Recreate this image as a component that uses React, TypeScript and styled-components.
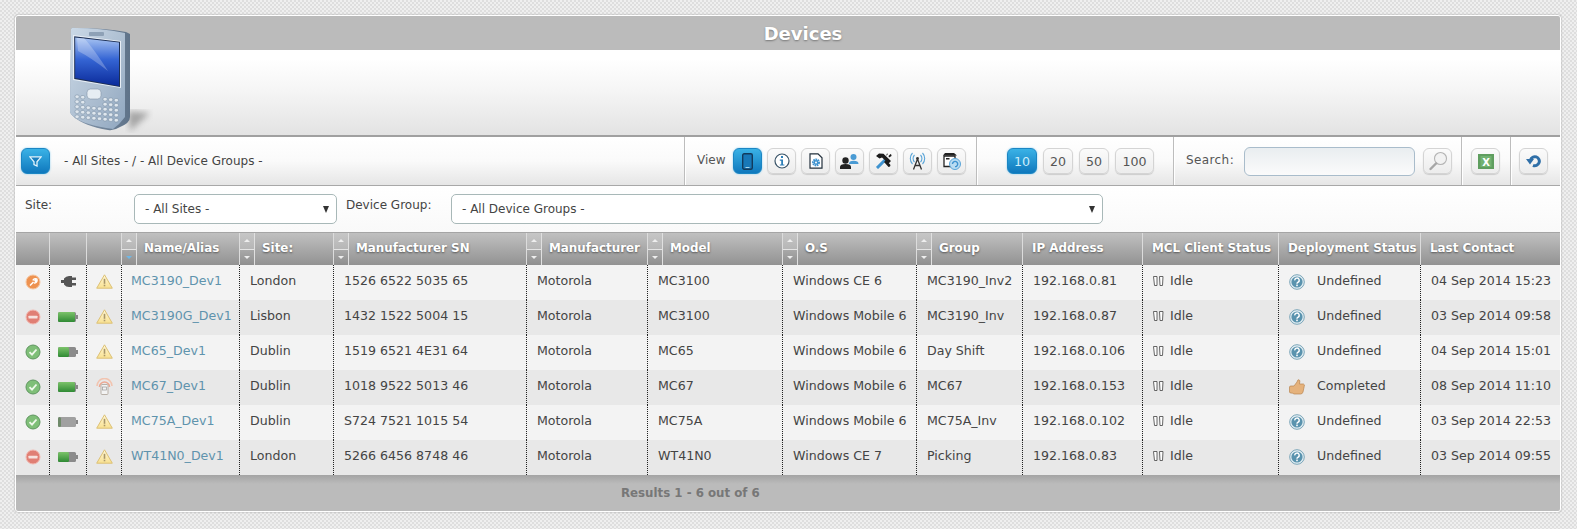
import React from 'react'
import styled, { createGlobalStyle } from 'styled-components'

const COLS = '33px 37px 35px 118px 94px 193px 121px 135px 134px 106px 120px 136px 142px 140px'

const GlobalStyle = createGlobalStyle`
  html, body { margin: 0; padding: 0; }
  body {
    font-family: "DejaVu Sans", Verdana, sans-serif;
    font-size: 12.6px;
    color: #444;
    background-color: #e9e9e9;
    background-image: conic-gradient(#dedede 25%, #efefef 0 50%, #dedede 0 75%, #efefef 0);
    background-size: 4px 4px;
  }
`

const Page = styled.div`
  width: 1577px;
  height: 529px;
  padding: 15px 16px 0 15px;
  box-sizing: border-box;
  overflow: hidden;
`

const Panel = styled.div`
  position: relative;
  width: 1546px;
  box-sizing: border-box;
  border: 1px solid #fff;
  border-radius: 3px;
  box-shadow: 0 0 2px #999;
  background: #fff;
  overflow: hidden;
`

const TitleBar = styled.div`
  height: 34px;
  background: #bbbbbb;
  color: #fff;
  font-size: 18px;
  font-weight: bold;
  text-shadow: 0 1px 2px #777;
  display: flex;
  align-items: center;
  justify-content: center;
  padding-left: 30px;
`

const Banner = styled.div`
  height: 85px;
  background: linear-gradient(#ffffff 10%, #f6f6f6 45%, #e3e3e3);
  border-bottom: 2px solid #a0a0a0;
`

const PhoneArt = styled.svg`
  position: absolute;
  left: 54px;
  top: 11px;
`

const Toolbar = styled.div`
  display: flex;
  height: 48px;
  font-size: 12px;
  background: linear-gradient(#ffffff, #fafafa 50%, #e6e6e6);
  border-bottom: 1px solid #a8a8a8;
`

const Section = styled.div<{ $width: number; $pad: number; $gap?: number; $first?: boolean }>`
  width: ${p => p.$width}px;
  box-sizing: border-box;
  display: flex;
  align-items: center;
  gap: ${p => p.$gap ?? 5}px;
  border-left: ${p => (p.$first ? 'none' : '1px solid #bdbdbd')};
  box-shadow: ${p => (p.$first ? 'none' : 'inset 1px 0 0 #fff')};
  padding-left: ${p => p.$pad}px;
`

const ToolButton = styled.button<{ $active?: boolean; $width?: number }>`
  width: ${p => p.$width ?? 29}px;
  height: 26px;
  padding: 0;
  flex: none;
  display: flex;
  align-items: center;
  justify-content: center;
  border-radius: 6px;
  font: 12.6px "DejaVu Sans", sans-serif;
  color: ${p => (p.$active ? '#cdeefb' : '#555')};
  border: 1px solid ${p => (p.$active ? '#1b86c4' : '#d4d4d4')};
  background: ${p =>
    p.$active ? 'linear-gradient(#3ab2e6, #0f78bd)' : 'linear-gradient(#fbfbfb, #ececec)'};
  box-shadow: ${p => (p.$active ? '0 0 2px #7cc8ee' : '0 1px 1px #ccc, inset 0 0 1px #fff')};
`

const FilterSummary = styled.span`
  margin-left: 9px;
  color: #444;
`

const ViewLabel = styled.span`
  margin-right: 3px;
  color: #555;
  padding-bottom: 3px;
`

const SearchLabel = styled.span`
  width: 53px;
  color: #555;
  padding-bottom: 3px;
  letter-spacing: 0.4px;
`

const SearchInput = styled.input`
  width: 171px;
  height: 29px;
  box-sizing: border-box;
  border: 1px solid #a9bccb;
  border-radius: 6px;
  background: linear-gradient(#e9edf0, #fbfbfb);
  margin-right: 3px;
`

const FilterRow = styled.div`
  height: 46px;
  display: flex;
  padding: 8px 0 0 9px;
  box-sizing: border-box;
  font-size: 12px;
  background: linear-gradient(#ffffff, #f9f9f9);
`

const FilterLabel = styled.label<{ $width: number }>`
  width: ${p => p.$width}px;
  padding-top: 4px;
  color: #444;
`

const SelectBox = styled.div<{ $width: number }>`
  width: ${p => p.$width}px;
  height: 30px;
  margin-right: 9px;
  box-sizing: border-box;
  border: 1px solid #a8b8b8;
  border-radius: 5px;
  background: #fff;
  padding: 0 7px 0 10px;
  display: flex;
  align-items: center;
  justify-content: space-between;
`

const SelectArrow = styled.i`
  width: 0;
  height: 0;
  border-left: 3.5px solid transparent;
  border-right: 3.5px solid transparent;
  border-top: 7px solid #333;
`

const HeadRow = styled.div`
  display: grid;
  grid-template-columns: ${COLS};
  height: 32px;
  border-top: 1px solid #a5a5a5;
  background: linear-gradient(#c0c0c0, #929292);
  color: #fff;
  font-weight: bold;
  font-size: 11.9px;
  text-shadow: 0 1px 2px #555;
`

const HeadCell = styled.div<{ $first?: boolean }>`
  display: flex;
  align-items: center;
  white-space: nowrap;
  overflow: hidden;
  border-left: ${p => (p.$first ? 'none' : '1px solid #dcdcdc')};
`

const SortStack = styled.div`
  width: 14px;
  height: 100%;
  flex: none;
  display: grid;
  grid-template-rows: 1fr 1fr;
  gap: 1px;
  background: #e4e4e4;
  border-right: 1px solid #e0e0e0;
`

const SortButton = styled.div<{ $dir: 'up' | 'down'; $on?: boolean }>`
  display: flex;
  align-items: center;
  justify-content: center;
  background: ${p => (p.$dir === 'up' ? 'linear-gradient(#c6c6c6, #b6b6b6)' : 'linear-gradient(#a8a8a8, #8f8f8f)')};
  &::after {
    content: '';
    width: 0;
    height: 0;
    border-left: 3px solid transparent;
    border-right: 3px solid transparent;
    ${p => (p.$dir === 'up' ? 'border-bottom: 3px solid #eee;' : `border-top: 3px solid ${p.$on ? '#6fb7e6' : '#eee'};`)}
  }
`

const HeadLabel = styled.span<{ $pad: number }>`
  padding: 0 0 3px ${p => p.$pad}px;
`

const BodyRow = styled.div<{ $alt: boolean }>`
  display: grid;
  grid-template-columns: ${COLS};
  height: 35px;
  background: ${p => (p.$alt ? '#e8e8e8' : '#f3f3f3')};
`

const Cell = styled.div<{ $icon?: boolean; $first?: boolean }>`
  display: flex;
  align-items: center;
  justify-content: ${p => (p.$icon ? 'center' : 'flex-start')};
  padding: 0 0 4px ${p => (p.$icon ? 0 : 10)}px;
  white-space: nowrap;
  border-left: ${p => (p.$first ? 'none' : '1px dotted #222')};
`

const IconCell = styled(Cell)`
  padding-bottom: 2px;
`

const NameLink = styled.a`
  color: #5f93ad;
  margin-left: -1px;
`

const StateIcon = styled.svg`
  margin-right: 6px;
  flex: none;
`

const DeployIcon = styled.svg`
  margin: 3px 12px 0 0;
  flex: none;
`

const Footer = styled.div`
  height: 36px;
  background: linear-gradient(#a4a4a4, #bbbbbb 25%);
  color: #777;
  font-weight: bold;
  font-size: 11.8px;
  display: flex;
  align-items: center;
  padding-left: 605px;
`

type Status = 'wrench' | 'stop' | 'ok'
type Power = 'plug' | 'full' | 'part' | 'empty'

interface Device {
  status: Status
  power: Power
  signal: 'warn' | 'cast'
  name: string
  site: string
  sn: string
  model: string
  os: string
  group: string
  ip: string
  deployed: boolean
  last: string
}

const devices: Device[] = [
  { status: 'wrench', power: 'plug', signal: 'warn', name: 'MC3190_Dev1', site: 'London', sn: '1526 6522 5035 65', model: 'MC3100', os: 'Windows CE 6', group: 'MC3190_Inv2', ip: '192.168.0.81', deployed: false, last: '04 Sep 2014 15:23' },
  { status: 'stop', power: 'full', signal: 'warn', name: 'MC3190G_Dev1', site: 'Lisbon', sn: '1432 1522 5004 15', model: 'MC3100', os: 'Windows Mobile 6', group: 'MC3190_Inv', ip: '192.168.0.87', deployed: false, last: '03 Sep 2014 09:58' },
  { status: 'ok', power: 'part', signal: 'warn', name: 'MC65_Dev1', site: 'Dublin', sn: '1519 6521 4E31 64', model: 'MC65', os: 'Windows Mobile 6', group: 'Day Shift', ip: '192.168.0.106', deployed: false, last: '04 Sep 2014 15:01' },
  { status: 'ok', power: 'full', signal: 'cast', name: 'MC67_Dev1', site: 'Dublin', sn: '1018 9522 5013 46', model: 'MC67', os: 'Windows Mobile 6', group: 'MC67', ip: '192.168.0.153', deployed: true, last: '08 Sep 2014 11:10' },
  { status: 'ok', power: 'empty', signal: 'warn', name: 'MC75A_Dev1', site: 'Dublin', sn: 'S724 7521 1015 54', model: 'MC75A', os: 'Windows Mobile 6', group: 'MC75A_Inv', ip: '192.168.0.102', deployed: false, last: '03 Sep 2014 22:53' },
  { status: 'stop', power: 'part', signal: 'warn', name: 'WT41N0_Dev1', site: 'London', sn: '5266 6456 8748 46', model: 'WT41N0', os: 'Windows CE 7', group: 'Picking', ip: '192.168.0.83', deployed: false, last: '03 Sep 2014 09:55' },
]

const headers: { label: string; sort?: boolean; on?: boolean }[] = [
  { label: '' },
  { label: '' },
  { label: '' },
  { label: 'Name/Alias', sort: true, on: true },
  { label: 'Site:', sort: true },
  { label: 'Manufacturer SN', sort: true },
  { label: 'Manufacturer', sort: true },
  { label: 'Model', sort: true },
  { label: 'O.S', sort: true },
  { label: 'Group', sort: true },
  { label: 'IP Address' },
  { label: 'MCL Client Status' },
  { label: 'Deployment Status' },
  { label: 'Last Contact' },
]

function Phone() {
  const keys: [number, number][] = []
  for (let r = 0; r < 5; r++) {
    for (let c = 0; c < 8; c++) {
      if (r < 2 && c > 1 && c < 5) continue
      keys.push([5 + c * 5.6, 68 + r * 5 + c * 0.5])
    }
  }
  return (
    <PhoneArt width="85" height="108" viewBox="0 0 85 108">
      <defs>
        <linearGradient id="ph" x1="0" y1="0" x2="1" y2="1">
          <stop offset="0" stopColor="#cbd9e7" />
          <stop offset="0.6" stopColor="#aabccf" />
          <stop offset="1" stopColor="#8fa6bf" />
        </linearGradient>
        <linearGradient id="scr" x1="0" y1="0" x2="0" y2="1">
          <stop offset="0" stopColor="#a8c4f2" />
          <stop offset="0.45" stopColor="#3565d4" />
          <stop offset="1" stopColor="#0a2a9a" />
        </linearGradient>
        <linearGradient id="sd" x1="0" y1="0" x2="1" y2="0">
          <stop offset="0" stopColor="#8799ae" />
          <stop offset="1" stopColor="#5f7389" />
        </linearGradient>
        <filter id="bl"><feGaussianBlur stdDeviation="3" /></filter>
      </defs>
      <path d="M58 84 L80 86 L60 104 Z" fill="#777" opacity="0.6" filter="url(#bl)" />
      <path d="M1 2 Q2 0 6 1 Q35 1 56 5 L60 7 L60 90 Q60 96 50 100 Q44 104 38 103 Q14 99 4 90 Q0 87 0 84 Z" fill="url(#sd)" />
      <path d="M1 2 Q2 0 6 1 Q30 1 55 6 L55 90 Q50 97 43 102 Q14 98 4 90 Q0 87 0 84 Z" fill="url(#ph)" />
      <path d="M3 8 L51 14 L51 61 L3 53 Z" fill="#e8eef5" />
      <path d="M4.2 9.2 L50 14.8 L50 60 L4.2 52 Z" fill="#1c2f55" />
      <path d="M5.2 10.5 L49 15.5 L49 59 L5.2 51 Z" fill="url(#scr)" />
      <path d="M14 11 Q24 22 38 44 Q20 30 8 24 L7 11 Z" fill="#fff" opacity="0.25" />
      <rect x="19" y="5" width="15" height="4" rx="1" fill="#8ea1b6" />
      {keys.map(([x, y]) => (
        <rect key={`${x}-${y}`} x={x} y={y} width="4.2" height="3.4" rx="1.4" fill="#dfe7ee" stroke="#71869c" strokeWidth="0.5" />
      ))}
      <rect x="17" y="62" width="14" height="10" rx="3.5" fill="#e6edf3" stroke="#8396aa" strokeWidth="0.6" />
    </PhoneArt>
  )
}

function StatusIcon({ kind }: { kind: Status }) {
  const fill = { wrench: '#ee9250', stop: '#e07f74', ok: '#7fbf78' }[kind]
  const ring = { wrench: '#f5c6a0', stop: '#f2b9b1', ok: '#5f9660' }[kind]
  return (
    <svg width="16" height="16" viewBox="0 0 16 16">
      <circle cx="8" cy="8" r="7" fill={fill} stroke={ring} />
      {kind === 'wrench' && <path d="M5 11.5 L8.5 8 M8 6.5 A2.4 2.4 0 0 1 11.5 5 L10 6.6 L10.8 7.6 L12 6.6 A2.6 2.6 0 0 1 9 9" stroke="#fff" strokeWidth="1.5" fill="none" />}
      {kind === 'stop' && <rect x="3.5" y="6.7" width="9" height="2.8" rx="0.6" fill="#f6e2de" />}
      {kind === 'ok' && <path d="M4.5 8.2 L7 10.7 L11.5 5.5" stroke="#eef8ea" strokeWidth="1.9" fill="none" />}
    </svg>
  )
}

function PowerIcon({ kind }: { kind: Power }) {
  if (kind === 'plug') {
    return (
      <svg width="15" height="11" viewBox="0 0 15 11">
        <rect x="0" y="4" width="4" height="3" fill="#555" />
        <path d="M3 2.5 Q5 0 8 0 H11 V11 H8 Q5 11 3 8.5 Z" fill="#555" />
        <rect x="11" y="1.5" width="4" height="2.5" fill="#555" />
        <rect x="11" y="7" width="4" height="2.5" fill="#555" />
      </svg>
    )
  }
  const level = { full: 17, part: 11, empty: 3 }[kind]
  const id = `bat-${kind}`
  return (
    <svg width="20" height="10" viewBox="0 0 20 10">
      <defs>
        <linearGradient id={id} x1="0" y1="0" x2="0" y2="1">
          <stop offset="0" stopColor="#7cc36a" />
          <stop offset="1" stopColor="#2f8a34" />
        </linearGradient>
      </defs>
      <rect x="0" y="0" width="18" height="10" rx="1.5" fill={kind === 'empty' ? '#a0a0a0' : '#8b8b8b'} />
      <rect x="18" y="3" width="2" height="4" fill="#888" />
      <rect x="0" y="0" width={level} height="10" rx="1.5" fill={kind === 'empty' ? '#6f8a6a' : `url(#${id})`} />
    </svg>
  )
}

function SignalIcon({ kind }: { kind: 'warn' | 'cast' }) {
  if (kind === 'cast') {
    return (
      <svg width="17" height="17" viewBox="0 0 17 17">
        <path d="M1 8 A7.5 7.5 0 0 1 16 8" fill="none" stroke="#f2c4b0" strokeWidth="1.6" />
        <path d="M3.5 9 A5 5 0 0 1 13.5 9" fill="none" stroke="#eca892" strokeWidth="1.6" />
        <rect x="5" y="6.5" width="7" height="10" rx="1" fill="#f3f3f3" stroke="#b8b0a8" />
        <rect x="6.5" y="9" width="4" height="3" fill="none" stroke="#999" strokeWidth="0.7" />
      </svg>
    )
  }
  return (
    <svg width="17" height="15" viewBox="0 0 17 15">
      <defs>
        <linearGradient id="warn" x1="0" y1="0" x2="0" y2="1">
          <stop offset="0" stopColor="#fff8d8" />
          <stop offset="1" stopColor="#f8e090" />
        </linearGradient>
      </defs>
      <path d="M8.5 0.8 L16.3 14.2 H0.7 Z" fill="url(#warn)" stroke="#dcc074" strokeLinejoin="round" />
      <rect x="7.7" y="4.8" width="1.6" height="5" fill="#a8966a" />
      <rect x="7.7" y="10.7" width="1.6" height="1.6" fill="#a8966a" />
    </svg>
  )
}

function IdleIcon() {
  return (
    <StateIcon width="11" height="10" viewBox="0 0 11 10">
      <path d="M0.5 0.5 H4 V9.5 H1.5 L0.5 0.5 Z M6.5 0.5 H10 L9.5 9.5 H7 Z" fill="#fff" stroke="#555" strokeWidth="0.9" />
    </StateIcon>
  )
}

function QuestionIcon() {
  return (
    <DeployIcon width="16" height="16" viewBox="0 0 16 16">
      <circle cx="8" cy="8" r="7.3" fill="#e3eef3" stroke="#7aa5b8" />
      <circle cx="8" cy="8" r="5.6" fill="#5a93ae" />
      <path d="M5.8 6.4 A2.2 2.2 0 1 1 8.8 8.3 Q8 8.7 8 9.8" fill="none" stroke="#fff" strokeWidth="1.4" />
      <rect x="7.2" y="10.6" width="1.6" height="1.6" fill="#fff" />
    </DeployIcon>
  )
}

function ThumbIcon() {
  return (
    <DeployIcon width="16" height="16" viewBox="0 0 16 16">
      <path d="M0.5 8 Q0.5 7 2 7 H5 L8 3 Q8.5 0.5 10 0.7 Q11.5 1 10.5 5 H14.5 Q16 5.5 15.2 7.5 L14 13 Q13.5 15 11.5 15 H5 Q4 14 2 14 Q0.5 14 0.5 13 Z" fill="#e5b27c" stroke="#b98550" strokeWidth="0.7" />
    </DeployIcon>
  )
}

function FilterGlyph() {
  return (
    <svg width="13" height="11" viewBox="0 0 13 11">
      <path d="M0.8 0.8 H12.2 L8 5.8 V10 L5 8.5 V5.8 Z" fill="#1b7fbe" stroke="#e2f4fc" strokeWidth="1.3" />
    </svg>
  )
}

function MobileGlyph() {
  return (
    <svg width="11" height="17" viewBox="0 0 11 17">
      <rect x="0.7" y="0.7" width="9.6" height="15.6" rx="1.5" fill="#1878b8" stroke="#123a5c" strokeWidth="1.4" />
      <rect x="3.5" y="14" width="4" height="1" fill="#a8d8f0" />
    </svg>
  )
}

function InfoGlyph() {
  return (
    <svg width="16" height="16" viewBox="0 0 16 16">
      <circle cx="8" cy="8" r="7" fill="#fff" stroke="#3a5468" strokeWidth="1.2" />
      <rect x="7" y="3" width="2" height="2" fill="#2d7fb8" />
      <path d="M5.8 6.6 H9 V11.5 H10.4 V12.6 H5.8 V11.5 H7.2 V7.7 H5.8 Z" fill="#2d7fb8" />
    </svg>
  )
}

function FileGearGlyph() {
  return (
    <svg width="14" height="16" viewBox="0 0 14 16">
      <path d="M1 0.8 H9 L13 4.8 V15.2 H1 Z" fill="#fff" stroke="#22303c" strokeWidth="1.2" />
      <circle cx="7" cy="9.5" r="3" fill="none" stroke="#3f93d0" strokeWidth="2" strokeDasharray="1.6 0.6" />
      <circle cx="7" cy="9.5" r="2.4" fill="#3f93d0" />
      <circle cx="7" cy="9.5" r="1" fill="#fff" />
    </svg>
  )
}

function UsersGlyph() {
  return (
    <svg width="19" height="15" viewBox="0 0 19 15">
      <circle cx="13.5" cy="3" r="3" fill="#4a9bd4" />
      <path d="M9 10 Q9 6.8 13.5 6.8 Q18.5 6.8 18.5 10 Z" fill="#4a9bd4" />
      <circle cx="5.5" cy="6.5" r="3.2" fill="#222" />
      <path d="M0 15 V13 Q0 10 5.5 10 Q11 10 11 13 V15 Z" fill="#222" />
    </svg>
  )
}

function ToolsGlyph() {
  return (
    <svg width="17" height="16" viewBox="0 0 17 16">
      <path d="M1.5 14.5 L10 6 M2.5 15.5 L11 7" stroke="#3f93d0" strokeWidth="1.6" />
      <path d="M1 3 L4 0.5 L8.5 0.8 L16 8 L13.5 10.5 L7 4.5 L4.5 5.5 Z" fill="#1b1b1b" />
      <path d="M9 9 L13.5 14 A2 2 0 0 0 15.5 12 L11 7 Z" fill="#1b1b1b" />
      <path d="M15.5 1 L13.5 3 L14 4.5 L16.5 3 Q16.8 1.5 15.5 1 Z M11 3 L13 1 L12 0.5 Z" fill="#1b1b1b" />
    </svg>
  )
}

function TowerGlyph() {
  return (
    <svg width="17" height="18" viewBox="0 0 17 18">
      <g fill="none" stroke="#5aa5d8" strokeWidth="1.1">
        <path d="M5.5 3 A5 5 0 0 0 5.5 10" />
        <path d="M3.5 1 A8 8 0 0 0 3.5 12" />
        <path d="M11.5 3 A5 5 0 0 1 11.5 10" />
        <path d="M13.5 1 A8 8 0 0 1 13.5 12" />
      </g>
      <circle cx="8.5" cy="6.5" r="1.4" fill="#333" />
      <path d="M8.5 7 L4.5 17.5 M8.5 7 L12.5 17.5 M6 13.5 H11" fill="none" stroke="#333" strokeWidth="1.3" />
    </svg>
  )
}

function ArchiveGlyph() {
  return (
    <svg width="19" height="18" viewBox="0 0 19 18">
      <path d="M3 1 H12 L15 3.5 H1 Z" fill="#222" />
      <path d="M2 4 H13 V14.5 H2 Z" fill="#fff" stroke="#222" strokeWidth="1.3" />
      <rect x="4" y="6" width="3.5" height="1.5" fill="#222" />
      <circle cx="13" cy="12" r="5.5" fill="#b9dcf2" stroke="#5aa5d8" />
      <path d="M10.5 12 A2.6 2.6 0 1 1 13 14.6" fill="none" stroke="#3f93d0" strokeWidth="1.4" />
    </svg>
  )
}

function LensGlyph() {
  return (
    <svg width="20" height="20" viewBox="0 0 20 20">
      <circle cx="12.5" cy="7.5" r="6" fill="#f2f2f2" stroke="#b4b4b4" strokeWidth="1.1" />
      <path d="M8 12.5 L2.5 18" stroke="#a6a6a6" strokeWidth="2.4" strokeLinecap="round" />
    </svg>
  )
}

function ExcelGlyph() {
  return (
    <svg width="16" height="15" viewBox="0 0 16 15">
      <rect x="0" y="0" width="16" height="15" fill="#5f9e5f" />
      <rect x="2.5" y="2" width="11" height="11" fill="#72b272" />
      <text x="8" y="11.5" textAnchor="middle" fontSize="10" fontWeight="bold" fill="#fff" fontFamily="DejaVu Sans, sans-serif">X</text>
    </svg>
  )
}

function RefreshGlyph() {
  return (
    <svg width="15" height="14" viewBox="0 0 15 14">
      <path d="M4.5 6 A4.5 4.5 0 1 1 7 11.3" fill="none" stroke="#2f6fa8" strokeWidth="3" />
      <path d="M0 5 H8 L4 10.5 Z" fill="#2f6fa8" />
    </svg>
  )
}

function SortControl({ on }: { on?: boolean }) {
  return (
    <SortStack>
      <SortButton $dir="up" />
      <SortButton $dir="down" $on={on} />
    </SortStack>
  )
}

export default function App() {
  return (
    <Page>
      <GlobalStyle />
      <Panel>
        <TitleBar>Devices</TitleBar>
        <Banner />
        <Phone />
        <Toolbar>
          <Section $width={668} $pad={5} $first>
            <ToolButton $active>
              <FilterGlyph />
            </ToolButton>
            <FilterSummary>- All Sites - / - All Device Groups -</FilterSummary>
          </Section>
          <Section $width={292} $pad={12}>
            <ViewLabel>View</ViewLabel>
            <ToolButton $active><MobileGlyph /></ToolButton>
            <ToolButton><InfoGlyph /></ToolButton>
            <ToolButton><FileGearGlyph /></ToolButton>
            <ToolButton><UsersGlyph /></ToolButton>
            <ToolButton><ToolsGlyph /></ToolButton>
            <ToolButton><TowerGlyph /></ToolButton>
            <ToolButton><ArchiveGlyph /></ToolButton>
          </Section>
          <Section $width={197} $pad={30} $gap={6}>
            <ToolButton $active $width={30}>10</ToolButton>
            <ToolButton $width={30}>20</ToolButton>
            <ToolButton $width={30}>50</ToolButton>
            <ToolButton $width={39}>100</ToolButton>
          </Section>
          <Section $width={288} $pad={12}>
            <SearchLabel>Search:</SearchLabel>
            <SearchInput />
            <ToolButton><LensGlyph /></ToolButton>
          </Section>
          <Section $width={49} $pad={9}>
            <ToolButton><ExcelGlyph /></ToolButton>
          </Section>
          <Section $width={50} $pad={8}>
            <ToolButton><RefreshGlyph /></ToolButton>
          </Section>
        </Toolbar>
        <FilterRow>
          <FilterLabel $width={109}>Site:</FilterLabel>
          <SelectBox $width={203}>
            - All Sites -
            <SelectArrow />
          </SelectBox>
          <FilterLabel $width={105}>Device Group:</FilterLabel>
          <SelectBox $width={652}>
            - All Device Groups -
            <SelectArrow />
          </SelectBox>
        </FilterRow>
        <HeadRow>
          {headers.map((h, i) => (
            <HeadCell key={i} $first={i === 0}>
              {h.sort && <SortControl on={h.on} />}
              {h.label && <HeadLabel $pad={h.sort ? 7 : 9}>{h.label}</HeadLabel>}
            </HeadCell>
          ))}
        </HeadRow>
        {devices.map((d, i) => (
          <BodyRow key={d.name} $alt={i % 2 === 1}>
            <IconCell $icon $first><StatusIcon kind={d.status} /></IconCell>
            <IconCell $icon><PowerIcon kind={d.power} /></IconCell>
            <IconCell $icon><SignalIcon kind={d.signal} /></IconCell>
            <Cell><NameLink>{d.name}</NameLink></Cell>
            <Cell>{d.site}</Cell>
            <Cell>{d.sn}</Cell>
            <Cell>Motorola</Cell>
            <Cell>{d.model}</Cell>
            <Cell>{d.os}</Cell>
            <Cell>{d.group}</Cell>
            <Cell>{d.ip}</Cell>
            <Cell><IdleIcon />Idle</Cell>
            <Cell>{d.deployed ? <ThumbIcon /> : <QuestionIcon />}{d.deployed ? 'Completed' : 'Undefined'}</Cell>
            <Cell>{d.last}</Cell>
          </BodyRow>
        ))}
        <Footer>Results 1 - 6 out of 6</Footer>
      </Panel>
    </Page>
  )
}
